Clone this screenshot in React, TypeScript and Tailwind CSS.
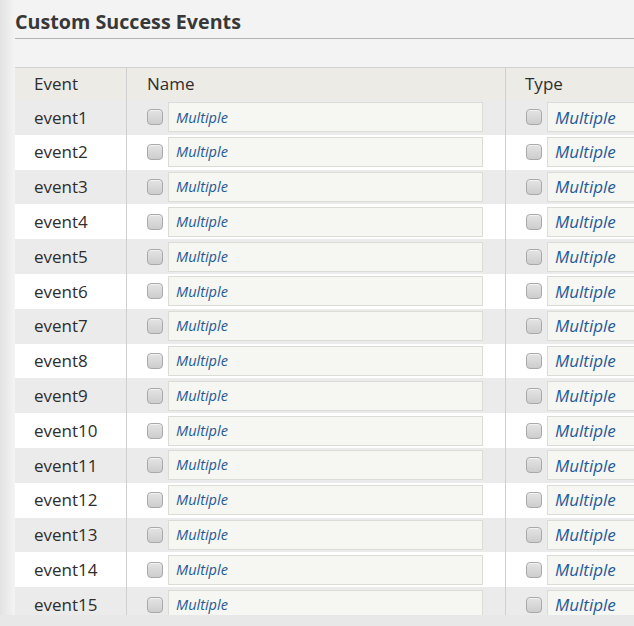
import React from 'react';

// Custom success events table (Adobe-style admin panel)
const events = Array.from({ length: 15 }, (_, i) => `event${i + 1}`);

const Checkbox = () => (
  <span className="block w-[16px] h-[16px] shrink-0 rounded-[4px] border border-[#a9a9a9] bg-[linear-gradient(#e4e4e4,#cdcdcd)] shadow-[inset_0_1px_0_#f2f2f2]" />
);

export default function App() {
  return (
    <div
      className="w-[634px] h-[626px] overflow-hidden flex flex-col bg-[linear-gradient(to_right,#e2e2e2,#f3f3f3_14px)] text-[#2e2e2e]"
      style={{ fontFamily: '"Open Sans", "Noto Sans", sans-serif' }}
    >
      <div className="pl-[15px] pt-[6px]">
        <h2 className="h-[33px] border-b border-[#b4b4b4] text-[19.7px] font-bold leading-[31px] text-[#383838]">
          Custom Success Events
        </h2>
      </div>

      <div className="flex-1 min-h-0 mt-[28px] pl-[15px] overflow-hidden">
        <div className="w-[720px]">
          {/* Header */}
          <div className="flex h-[33px] border-t border-[#d2d2d2] bg-[#ecebe6] text-[17px]">
            <div className="w-[112px] pl-[19px] flex items-center border-r border-[#cfcfcf]">Event</div>
            <div className="w-[379px] pl-[20px] flex items-center border-r border-[#cfcfcf]">Name</div>
            <div className="flex-1 pl-[19px] flex items-center">Type</div>
          </div>

          {/* Rows */}
          {events.map((ev, i) => (
            <div key={ev} className={`flex h-[34.8px] ${i % 2 === 0 ? 'bg-[#ebebeb]' : 'bg-white'}`}>
              <div className="w-[112px] pl-[19px] flex items-center border-r border-[#cfcfcf] text-[17px]">{ev}</div>
              <div className="w-[379px] pl-[20px] flex items-center gap-[5px] border-r border-[#cfcfcf]">
                <Checkbox />
                <div className="w-[315px] h-[30px] flex items-center pl-[7px] bg-[#f6f6f2] border border-[#dcdcd6] text-[14.5px] font-medium italic text-[#245a98]">
                  Multiple
                </div>
              </div>
              <div className="flex-1 pl-[20px] flex items-center gap-[5px]">
                <Checkbox />
                <div className="w-[160px] h-[30px] flex items-center pl-[7px] bg-[#f6f6f2] border border-[#dcdcd6] text-[17px] font-medium italic text-[#245a98]">
                  Multiple
                </div>
              </div>
            </div>
          ))}
        </div>
      </div>

      <div className="h-[11px] shrink-0 bg-[#e8e8e8]" />
    </div>
  );
}
